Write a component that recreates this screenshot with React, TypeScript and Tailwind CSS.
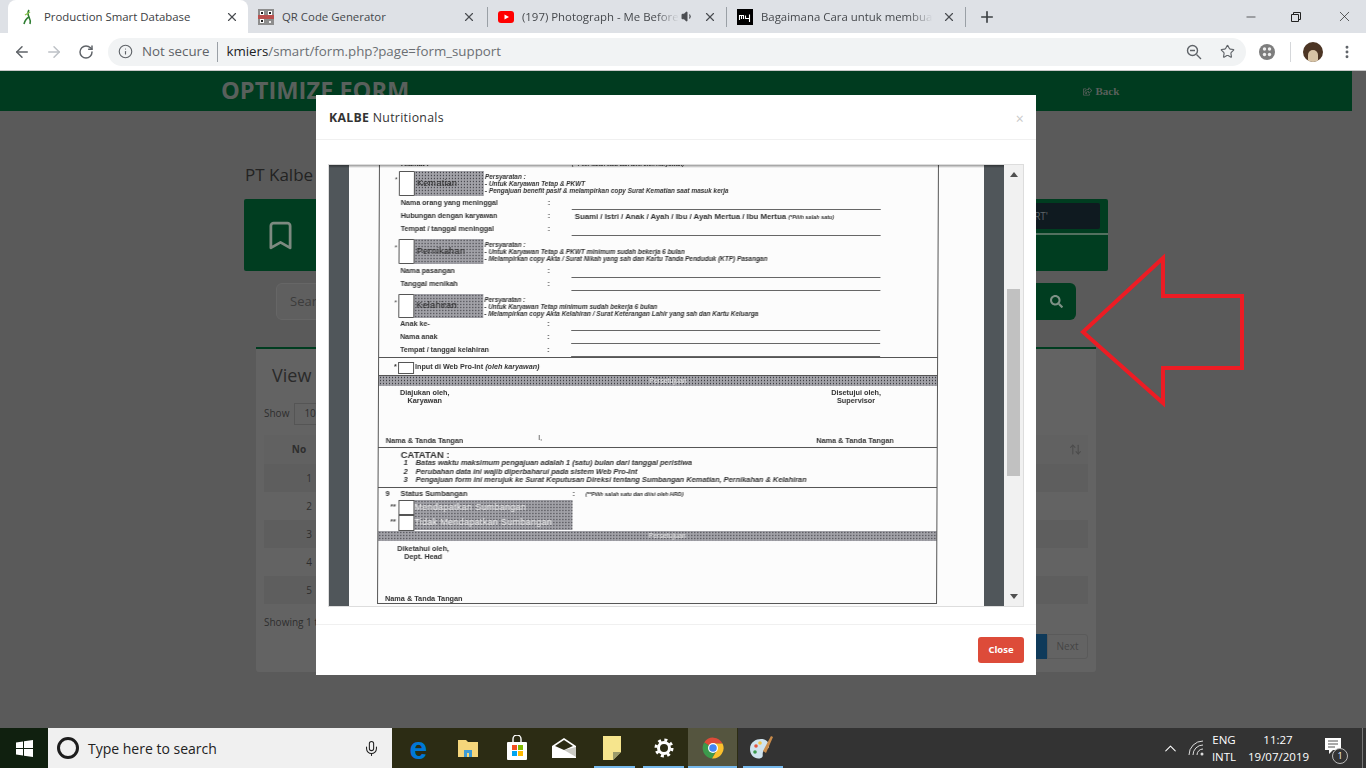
import { ArrowLeft, ArrowRight, RotateCw, Info, Star, MoreVertical, Minus, X, Plus, Mic, Bookmark, ChevronUp, Volume1, ArrowUpDown } from "lucide-react";
import { FaSearch, FaRegShareSquare } from "react-icons/fa";
import type { ReactNode } from "react";

const halftone = "bg-[#7c7c82] bg-[radial-gradient(#3c3c42_0.7px,#a2a2a8_1px)] bg-[length:3px_3px]";

const Favicon = ({ kind }: { kind: string }) => {
  if (kind === "figure")
    return (
      <svg width="16" height="16" viewBox="0 0 16 16" fill="none">
        <path d="M9 1c-2 3-1 5 0 7-2 1-4 3-5 7M9 8c1 2 2 4 1 7" stroke="#2e7d32" strokeWidth="1.6" />
        <path d="M5 6l5-3" stroke="#8bc34a" strokeWidth="1.4" />
      </svg>
    );
  if (kind === "qr")
    return (
      <svg width="16" height="16" viewBox="0 0 16 16">
        <rect width="16" height="16" fill="#8d8d8d" />
        <rect x="0" y="6" width="16" height="4" fill="#b9504e" />
        <rect x="2" y="2" width="4" height="4" fill="#fff" />
        <rect x="10" y="2" width="4" height="4" fill="#fff" />
        <rect x="2" y="10" width="4" height="4" fill="#fff" />
        <rect x="3" y="3" width="2" height="2" fill="#222" />
        <rect x="11" y="3" width="2" height="2" fill="#222" />
        <rect x="3" y="11" width="2" height="2" fill="#222" />
        <rect x="11" y="12" width="2" height="2" fill="#eee" />
      </svg>
    );
  if (kind === "yt")
    return (
      <svg width="16" height="16" viewBox="0 0 16 16">
        <rect x="0" y="2" width="16" height="12" rx="3" fill="#f00" />
        <path d="M6.5 5.5v5L11 8z" fill="#fff" />
      </svg>
    );
  return (
    <svg width="16" height="16" viewBox="0 0 16 16" fill="none">
      <rect width="16" height="16" fill="#000" />
      <path d="M2.5 11V6.5h4V10M4.5 6.5V10M8.5 6.5V9.5h4M12.5 5.5V13" stroke="#fff" strokeWidth="1.1" />
    </svg>
  );
};

const Tab = ({ w, icon, title, active, extra, fade }: { w: string; icon: string; title: string; active?: boolean; extra?: ReactNode; fade?: boolean }) => (
  <div className={`${w} relative flex h-[33px] shrink-0 items-center ${active ? "rounded-t-[8px] bg-white pl-[12px]" : "pl-[10px]"}`}>
    <div className="w-[16px] shrink-0">
      <Favicon kind={icon} />
    </div>
    <span className={`ml-[8px] flex-1 overflow-hidden whitespace-nowrap text-[11.4px] ${active ? "text-[#3c4043]" : "text-[#45484c]"} ${fade ? "[mask-image:linear-gradient(to_right,#000_85%,transparent)]" : ""}`}>
      {title}
    </span>
    {extra}
    <X size={14} strokeWidth={2} className="mr-[9px] ml-[9px] shrink-0 text-[#4a4d51]" />
  </div>
);

const TabBar = () => (
  <div className="flex h-[33px] items-center bg-[#dee1e6] pl-[8px] font-['Open_Sans',sans-serif]">
    <Tab w="w-[240px]" icon="figure" title="Production Smart Database" active />
    <Tab w="w-[237px]" icon="qr" title="QR Code Generator" />
    <div className="ml-[2px] h-[20px] w-px shrink-0 bg-[#9aa0a6]" />
    <Tab w="w-[238px]" icon="yt" title="(197) Photograph - Me Before You" fade extra={<Volume1 size={13} fill="#4a4d51" className="ml-[2px] shrink-0 text-[#4a4d51]" />} />
    <div className="h-[20px] w-px shrink-0 bg-[#9aa0a6]" />
    <Tab w="w-[238px]" icon="mu" title="Bagaimana Cara untuk membuat Form" fade />
    <div className="h-[20px] w-px shrink-0 bg-[#9aa0a6]" />
    <Plus size={18} strokeWidth={2.2} className="ml-[12px] text-[#3c4043]" />
    <div className="ml-auto flex items-center pr-[13px] text-[#222]">
      <Minus size={14} strokeWidth={1.2} className="mr-[32px]" />
      <svg width="12" height="12" viewBox="0 0 12 12" fill="none" stroke="#222" className="mr-[34px]">
        <path d="M1.5 3.5h7v7h-7zM3.5 3.5v-2h7v7h-2" />
      </svg>
      <X size={17} strokeWidth={1} />
    </div>
  </div>
);

const ZoomMinus = () => (
  <svg width="16" height="16" viewBox="0 0 16 16" fill="none" stroke="#5f6368" strokeWidth="1.4" className="ml-auto">
    <circle cx="6.5" cy="6.5" r="5" />
    <path d="M10.5 10.5L15 15M4 6.5h5" />
  </svg>
);

const ToolBar = () => (
  <div className="flex h-[38px] items-center border-b border-[#c8c8c8] bg-white pl-[13px] font-['Open_Sans',sans-serif]">
    <ArrowLeft size={18} strokeWidth={2} className="text-[#5f6368]" />
    <ArrowRight size={18} strokeWidth={2} className="ml-[14px] text-[#bdc1c6]" />
    <RotateCw size={16} strokeWidth={2.2} className="ml-[15px] text-[#5f6368]" />
    <div className="ml-[14px] flex h-[28px] w-[1138px] items-center rounded-full bg-[#f1f3f4] pr-[11px] pl-[10px]">
      <Info size={15} strokeWidth={1.8} className="text-[#5f6368]" />
      <span className="ml-[9px] pt-px text-[13.3px] text-[#5f6368]">Not secure</span>
      <div className="mx-[8px] h-[20px] w-px bg-[#9aa0a6]" />
      <span className="pt-px text-[13.3px] text-[#6b6f73]">
        <span className="text-[#202124]">kmiers</span>/smart/form.php?page=form_support
      </span>
      <ZoomMinus />
      <Star size={15} strokeWidth={1.8} className="ml-[18px] text-[#5f6368]" />
    </div>
    <svg width="18" height="18" viewBox="0 0 18 18" className="ml-[12px]">
      <circle cx="9" cy="9" r="8" fill="#7d7d7d" />
      <circle cx="6.5" cy="6" r="1.7" fill="#eee" />
      <circle cx="11.5" cy="6" r="1.7" fill="#eee" />
      <circle cx="6.5" cy="11.5" r="1.7" fill="#eee" />
      <circle cx="11.5" cy="11.5" r="1.7" fill="#eee" />
    </svg>
    <div className="ml-[14px] h-[20px] w-px bg-[#d5d7da]" />
    <div className="ml-[12px] flex h-[20px] w-[20px] items-end justify-center overflow-hidden rounded-full bg-[#4c3524]">
      <div className="h-[12px] w-[10px] rounded-t-full bg-[#d7c3a5]" />
    </div>
    <MoreVertical size={16} strokeWidth={2.4} className="ml-[16px] text-[#5f6368]" />
  </div>
);

const BackgroundPage = () => (
  <div className="h-[657px] overflow-hidden bg-[#5a5a5a] font-['Open_Sans',sans-serif]">
    <div className="flex h-[40px] w-[1352px] items-center bg-[#003b1f] pl-[221px]">
      <span className="text-[23.7px] font-bold text-[#59605c]">OPTIMIZE FORM</span>
      <span className="ml-[674px] flex items-center gap-[3px] font-['Liberation_Serif',serif] text-[11px] font-bold text-[#59605c]">
        <FaRegShareSquare size={9} /> Back
      </span>
    </div>
    <div className="ml-[244px] w-[864px]">
      <div className="mt-[51px] h-[37px] pl-[1px] text-[17px] text-[#232323]">PT Kalbe Nutritionals</div>
      <div className="relative flex h-[72px] rounded-[2px] bg-[#003d20]">
        <div className="flex w-[72px] items-center justify-center">
          <Bookmark size={33} strokeWidth={2} className="text-[#7d8a80]" />
        </div>
        <div className="ml-auto flex w-[240px] flex-col">
          <div className="flex h-[34px] items-center justify-end pr-[8px]">
            <div className="flex h-[26px] w-[200px] items-center justify-end rounded-[2px] bg-[#0f1a20] pr-[52px] text-[10px] text-[#5d6468]">RT'</div>
          </div>
          <div className="h-[2px] bg-[#53705f]" />
        </div>
      </div>
      <div className="mt-[12px] ml-[32px] flex h-[37px] w-[800px]">
        <div className="flex flex-1 items-center rounded-l-[6px] border border-[#666] bg-[#5f5f5f] pl-[13px] text-[13px] text-[#3c3c3c]">Search</div>
        <div className="flex w-[40px] items-center justify-center rounded-r-[6px] bg-[#003d20]">
          <FaSearch size={13} className="text-[#7e9186]" />
        </div>
      </div>
      <div className="mt-[27px] ml-[12px] h-[325px] w-[840px] rounded-b-[3px] border-t-2 border-[#003d20] bg-[#636363] px-[8px]">
        <div className="h-[51px] pt-[13px] pl-[8px] text-[18px] text-[#2a2a2a]">View Data</div>
        <div className="flex h-[27px] items-center text-[10px] text-[#2e2e2e]">
          Show
          <div className="ml-[5px] flex h-[22px] w-[40px] items-center border border-[#555] pl-[9px]">10</div>
        </div>
        <div className="mt-[8px] w-[824px] text-[10px] text-[#2e2e2e]">
          <div className="flex h-[29px] items-center bg-[#616161]">
            <div className="w-[70px] text-center font-bold">No</div>
            <ArrowUpDown size={13} className="ml-auto mr-[6px] text-[#4c4c4c]" />
          </div>
          {[1, 2, 3, 4, 5].map((n) => (
            <div key={n} className={`flex h-[28px] items-center justify-start ${n % 2 ? "bg-[#5e5e5e]" : "bg-[#636363]"}`}>
              <div className="w-[48px] text-right">{n}</div>
            </div>
          ))}
        </div>
        <div className="mt-[10px] flex items-start text-[10px] text-[#2e2e2e]">
          <span className="pt-[1px]">Showing 1 to 5 of 5 entries</span>
          <div className="mt-[20px] ml-auto flex h-[25px]">
            <div className="w-[40px] bg-[#0f3a5a]" />
            <div className="flex w-[41px] items-center justify-center rounded-r-[3px] border border-[#5a5a5a] text-[#454545]">Next</div>
          </div>
        </div>
      </div>
    </div>
  </div>
);

const Note = ({ children }: { children: ReactNode }) => (
  <div className="whitespace-nowrap text-[6.45px] leading-[7px] font-bold italic text-[#303030]">{children}</div>
);

const Section = ({ label, h, lines }: { label: string; h: string; lines: string[] }) => (
  <div className={`flex ${h} pl-[15px]`}>
    <span className="mt-[4px] w-[4px] text-[7px] text-[#444]">*</span>
    <div className="h-full w-[16px] rounded-[1px] border border-[#555] bg-white" />
    <div className={`flex h-full w-[69px] items-center pl-[2px] text-[9px] tracking-[0.3px] text-[#222] ${halftone}`}>{label}</div>
    <div className="ml-[1px] flex flex-col justify-center">
      {lines.map((l) => (
        <Note key={l}>{l}</Note>
      ))}
    </div>
  </div>
);

const Field = ({ label, value, line = true }: { label: string; value?: string; line?: boolean }) => (
  <div className="flex h-[13px] items-center pl-[21px] text-[7.1px] font-bold text-[#303030]">
    <span className="w-[147px] whitespace-nowrap">{label}</span>
    <span className="w-[24px]">:</span>
    {line ? (
      <div className="h-full w-[309px] border-b border-[#666]" />
    ) : (
      <span className="ml-[3px] whitespace-nowrap text-[7.8px]">
        {value} <span className="text-[5.5px] italic">(*Pilih salah satu)</span>
      </span>
    )}
  </div>
);

const Band = ({ label }: { label: string }) => (
  <div className={`flex h-[10px] items-center justify-center text-[7px] text-[#e5e5e5] ${halftone}`}>
    <span className="ml-[20px]">{label}</span>
  </div>
);

const CheckRow = ({ label, h }: { label: string; h: string }) => (
  <div className={`flex ${h} pl-[12px]`}>
    <span className="w-[8px] text-[7px] leading-[14px] font-bold text-[#444]">**</span>
    <div className="h-full w-[16px] border border-[#555] bg-white" />
    <div className={`flex h-[15px] w-[158px] items-center text-[9px] tracking-[0.3px] text-[#eee] ${halftone}`}>{label}</div>
  </div>
);

const ScanForm = () => (
  <div className="mt-[-6px] ml-[29px] w-[560px] skew-x-[-0.25deg] border-x border-[#555] font-['Liberation_Sans',sans-serif] blur-[0.4px]">
    <div className="flex h-[12px] items-start overflow-hidden pl-[21px] text-[7.1px] font-bold text-[#303030]">
      <span className="w-[171px]">Alamat :</span>
      <span className="mt-[1px] text-[5.5px] italic">(**Pilih salah satu dan diisi oleh Karyawan)</span>
    </div>
    <Section
      label="Kematian"
      h="h-[25px]"
      lines={["Persyaratan :", "- Untuk Karyawan Tetap & PKWT", "- Pengajuan benefit pasif & melampirkan copy Surat Kematian saat masuk kerja"]}
    />
    <div className="pt-[1px] pb-[3px]">
      <Field label="Nama orang yang meninggal" />
      <Field label="Hubungan dengan karyawan" value="Suami / Istri / Anak / Ayah / Ibu / Ayah Mertua / Ibu Mertua" line={false} />
      <Field label="Tempat / tanggal meninggal" />
    </div>
    <Section
      label="Pernikahan"
      h="h-[25px]"
      lines={["Persyaratan :", "- Untuk Karyawan Tetap & PKWT minimum sudah bekerja 6 bulan", "- Melampirkan copy Akta / Surat Nikah yang sah dan Kartu Tanda Penduduk (KTP) Pasangan"]}
    />
    <div className="pt-[1px] pb-[3px]">
      <Field label="Nama pasangan" />
      <Field label="Tanggal menikah" />
    </div>
    <Section
      label="Kelahiran"
      h="h-[24px]"
      lines={["Persyaratan :", "- Untuk Karyawan Tetap minimum sudah bekerja 6 bulan", "- Melampirkan copy Akta Kelahiran / Surat Keterangan Lahir yang sah dan Kartu Keluarga"]}
    />
    <div>
      <Field label="Anak ke-" />
      <Field label="Nama anak" />
      <Field label="Tempat / tanggal kelahiran" />
    </div>
    <div className="flex h-[19px] items-center border-y border-[#555] pt-[2px] pl-[15px] text-[7.2px] font-bold text-[#303030]">
      <span className="w-[4px] text-[7px]">*</span>
      <div className="h-[12px] w-[16px] border border-[#555] bg-white" />
      <span className="ml-[1px]">
        Input di Web Pro-Int <span className="italic">(oleh karyawan)</span>
      </span>
    </div>
    <Band label="Persetujuan" />
    <div className="flex h-[62px] flex-col justify-between border-b border-[#555] text-[7.3px] font-bold text-[#303030]">
      <div className="flex justify-between pt-[3px] pr-[56px] pl-[21px]">
        <div className="text-center leading-[8px]">
          Diajukan oleh,
          <br />
          Karyawan
        </div>
        <div className="text-center leading-[8px]">
          Disetujui oleh,
          <br />
          Supervisor
        </div>
      </div>
      <div className="flex pr-[43px] pl-[7px]">
        <span>Nama & Tanda Tangan</span>
        <span className="mt-[-3px] ml-[75px] font-normal">l,</span>
        <span className="ml-auto">Nama & Tanda Tangan</span>
      </div>
    </div>
    <div className="h-[40px] border-b border-[#555] pl-[22px] text-[#303030]">
      <div className="h-[11px] pt-[2px] text-[9.5px] leading-[10px] font-bold">CATATAN :</div>
      {[
        "Batas waktu maksimum pengajuan adalah 1 (satu) bulan dari tanggal peristiwa",
        "Perubahan data ini wajib diperbaharui pada sistem Web Pro-Int",
        "Pengajuan form ini merujuk ke Surat Keputusan Direksi tentang Sumbangan Kematian, Pernikahan & Kelahiran",
      ].map((t, i) => (
        <div key={t} className="flex h-[8.5px] text-[7.4px] leading-[8.5px] font-bold whitespace-nowrap italic">
          <span className="w-[15px] pl-[3px]">{i + 1}</span>
          {t}
        </div>
      ))}
    </div>
    <div className="flex h-[12px] items-center pl-[7px] text-[7.4px] font-bold text-[#303030]">
      <span className="w-[15px]">9</span>
      <span className="w-[172px]">Status Sumbangan</span>
      <span className="w-[13px]">:</span>
      <span className="text-[5.5px] italic">(**Pilih salah satu dan diisi oleh HRD)</span>
    </div>
    <CheckRow label="Mendapatkan Sumbangan" h="h-[15px]" />
    <CheckRow label="Tidak Mendapatkan Sumbangan" h="h-[16px]" />
    <Band label="Persetujuan" />
    <div className="flex h-[63px] flex-col justify-between border-b border-[#555] pl-[19px] text-[7.3px] font-bold text-[#303030]">
      <div className="w-fit pt-[4px] text-center leading-[8px]">
        Diketahui oleh,
        <br />
        Dept. Head
      </div>
      <span className="ml-[-12px] leading-[8px]">Nama & Tanda Tangan</span>
    </div>
  </div>
);

const PdfViewer = () => (
  <div className="relative mt-[24px] ml-[12px] flex h-[443px] w-[696px] overflow-hidden border border-[#ddd]">
    <div className="flex flex-1 justify-center bg-[#50565a]">
      <div className="h-full w-[635px] overflow-hidden bg-[#fcfcfc]">
        <ScanForm />
      </div>
    </div>
    <div className="absolute inset-x-0 top-0 h-[3px] bg-gradient-to-b from-black/40 to-transparent" />
    <div className="relative flex w-[19px] flex-col items-center bg-[#f1f1f1]">
      <div className="mt-[7px] h-0 w-0 border-x-[4px] border-b-[5px] border-x-transparent border-b-[#505050]" />
      <div className="mt-[112px] h-[187px] w-[13px] bg-[#c1c1c1]" />
      <div className="mt-auto mb-[7px] h-0 w-0 border-x-[4px] border-t-[5px] border-x-transparent border-t-[#505050]" />
    </div>
  </div>
);

const Modal = () => (
  <div className="absolute top-[95px] left-[316px] h-[580px] w-[720px] bg-white font-['Open_Sans',sans-serif]">
    <div className="flex h-[45px] items-center justify-between border-b border-[#f0f0f0] px-[12px] pt-[2px] text-[12.3px] tracking-[0.3px] text-[#333]">
      <span className="pl-px">
        <b>KALBE</b> Nutritionals
      </span>
      <span className="text-[14px] text-[#c9c9c9]">×</span>
    </div>
    <PdfViewer />
    <div className="mt-[17px] flex h-[51px] justify-end border-t border-[#f0f0f0] pt-[12px] pr-[12px]">
      <button className="h-[26px] w-[46px] rounded-[3px] bg-[#dd4b39] text-[9.5px] font-bold text-white">Close</button>
    </div>
  </div>
);

const RedArrow = () => (
  <svg width="180" height="160" viewBox="0 0 180 160" fill="none" className="absolute top-[253px] left-[1075px]">
    <path d="M8 79L88 5V43H167V115H88V150Z" stroke="#ed1c24" strokeWidth="4" />
  </svg>
);

const TaskIcon = ({ children, active, on }: { children: ReactNode; active?: boolean; on?: boolean }) => (
  <div className={`relative flex h-full w-[49px] items-center justify-center ${active ? "bg-[#55553f]" : ""}`}>
    {children}
    {on && <div className={`absolute bottom-0 h-[2px] bg-[#76b9ed] ${active ? "w-full" : "w-[41px]"}`} />}
  </div>
);

const TaskBar = () => (
  <div className="flex h-[40px] bg-[#333] font-['Open_Sans',sans-serif] text-white">
    <div className="flex w-[48px] items-center justify-center bg-[#10200f]">
      <svg width="17" height="17" viewBox="0 0 17 17" fill="#fff">
        <path d="M0 2.4L7 1.4v6.6H0zM8 1.3L17 0v8H8zM0 9h7v6.6L0 14.6zM8 9h9v8l-9-1.3z" />
      </svg>
    </div>
    <div className="flex w-[344px] items-center bg-[#f0f0f0] pl-[9px] text-[#222]">
      <div className="h-[22px] w-[22px] rounded-full border-[3px] border-[#1d1d1d]" />
      <span className="ml-[9px] text-[14px]">Type here to search</span>
      <Mic size={17} strokeWidth={1.5} className="ml-auto mr-[12px] text-[#222]" />
    </div>
    <div className="flex w-[346px] items-center bg-[#2c2c14] pl-[2px]">
      <TaskIcon>
        <span className="font-['Liberation_Sans',sans-serif] text-[32px] leading-none font-bold text-[#0078d7]">e</span>
      </TaskIcon>
      <TaskIcon>
        <svg width="22" height="22" viewBox="0 0 22 22">
          <path d="M1 3h8l2 2h10v15H1z" fill="#f5d67b" />
          <rect x="7" y="13" width="8" height="7" fill="#3d9bd6" />
          <rect x="10" y="16" width="2" height="4" fill="#f5d67b" />
        </svg>
      </TaskIcon>
      <TaskIcon>
        <svg width="24" height="26" viewBox="0 0 24 26">
          <path d="M8 7V4a4 4 0 018 0v3" fill="none" stroke="#fff" strokeWidth="1.4" />
          <rect x="2" y="7" width="20" height="18" rx="1" fill="#fff" />
          <rect x="7" y="10" width="5" height="5" fill="#f25022" />
          <rect x="13" y="10" width="5" height="5" fill="#7fba00" />
          <rect x="7" y="16" width="5" height="5" fill="#00a4ef" />
          <rect x="13" y="16" width="5" height="5" fill="#ffb900" />
        </svg>
      </TaskIcon>
      <TaskIcon>
        <svg width="24" height="20" viewBox="0 0 24 20" className="ml-[-3px]">
          <path d="M12 0L24 8v12H0V8z" fill="#fff" />
          <path d="M3 8l9-6 9 6-9 4z" fill="#2c2c14" />
          <path d="M24 9v10L12 12z" fill="#2c2c14" opacity="0.25" />
        </svg>
      </TaskIcon>
      <TaskIcon on>
        <svg width="18" height="24" viewBox="0 0 18 24" className="ml-[-6px]">
          <path d="M0 0h18v16l-8 8H0z" fill="#f6e58d" />
          <path d="M18 16h-8v8z" fill="#9b9b6a" />
        </svg>
      </TaskIcon>
      <TaskIcon on>
        <svg width="20" height="20" viewBox="0 0 20 20" fill="none">
          <circle cx="10" cy="10" r="5.5" stroke="#fff" strokeWidth="3" />
          <circle cx="10" cy="10" r="8" stroke="#fff" strokeWidth="3" strokeDasharray="3 3.3" />
        </svg>
      </TaskIcon>
      <TaskIcon active on>
        <svg width="22" height="22" viewBox="0 0 22 22">
          <path d="M11 11L2.2 5.5A10.5 10.5 0 0120.5 6.5H11z" fill="#dd4b39" />
          <path d="M11 11L2.2 5.5A10.5 10.5 0 0010 21.5L14.5 13z" fill="#3c9a4c" />
          <path d="M11 6.5h9.5A10.5 10.5 0 0110 21.5L14.5 14z" fill="#fbc02d" />
          <circle cx="11" cy="11" r="5" fill="#fff" />
          <circle cx="11" cy="11" r="3.8" fill="#4285f4" />
        </svg>
      </TaskIcon>
    </div>
    <div className="relative flex w-[49px] items-center justify-center">
      <svg width="28" height="30" viewBox="0 0 28 30" className="ml-[-3px]">
        <path d="M3 16c0-7 6-10 11-10 5 0 8 3 8 7 0 4-5 3-6 6s1 4-2 6c-5 2-11-2-11-9z" fill="#cfe3ee" />
        <circle cx="9" cy="13" r="1.8" fill="#e5533d" />
        <circle cx="8" cy="19" r="1.8" fill="#3c9a4c" />
        <circle cx="13" cy="10" r="1.8" fill="#f5c542" />
        <path d="M16 18L24 3l2 1-7 16z" fill="#c98b4a" />
      </svg>
      <div className="absolute bottom-0 h-[2px] w-[40px] bg-[#76b9ed]" />
    </div>
    <div className="ml-auto flex items-center">
      <ChevronUp size={19} strokeWidth={1.3} className="mr-[8px]" />
      <svg width="18" height="16" viewBox="0 0 18 16" fill="none" stroke="#ddd" strokeWidth="1" className="mr-[5px]">
        <path d="M1 15A14 14 0 0115 1M5 15A10 10 0 0115 5M9 15A6 6 0 0115 9" />
        <circle cx="14" cy="14" r="1.5" fill="#ddd" stroke="none" />
      </svg>
      <div className="w-[26px] text-center text-[11.5px] leading-[17px]">
        ENG
        <br />
        INTL
      </div>
      <div className="ml-[11px] w-[60px] text-center text-[11.5px] leading-[17px]">
        11:27
        <br />
        19/07/2019
      </div>
      <div className="relative ml-[17px] mr-[11px] h-[40px] w-[26px]">
        <svg width="17" height="17" viewBox="0 0 17 17" className="absolute top-[10px] left-0">
          <path d="M0 0h16v12H8l-4 4v-4H0z" fill="#fff" />
          <path d="M3 3h10M3 6h10M3 9h7" stroke="#555" />
        </svg>
        <div className="absolute top-[20px] left-[7px] flex h-[16px] w-[16px] items-center justify-center rounded-full border border-[#bbb] bg-[#333] text-[9px]">1</div>
      </div>
      <div className="mr-[3px] h-full w-px bg-[#777]" />
    </div>
  </div>
);

const App = () => (
  <div className="relative h-[768px] w-[1366px] overflow-hidden">
    <TabBar />
    <ToolBar />
    <BackgroundPage />
    <TaskBar />
    <Modal />
    <RedArrow />
  </div>
);

export default App;
